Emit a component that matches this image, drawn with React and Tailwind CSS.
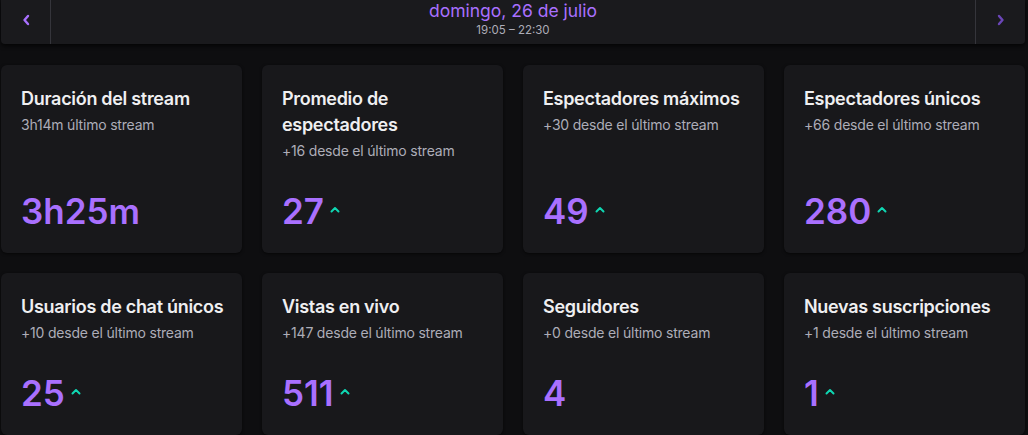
import React from 'react';

const stats = [
  { title: 'Duración del stream', note: '3h14m último stream', value: '3h25m', up: false },
  { title: 'Promedio de espectadores', note: '+16 desde el último stream', value: '27', up: true },
  { title: 'Espectadores máximos', note: '+30 desde el último stream', value: '49', up: true },
  { title: 'Espectadores únicos', note: '+66 desde el último stream', value: '280', up: true },
  { title: 'Usuarios de chat únicos', note: '+10 desde el último stream', value: '25', up: true },
  { title: 'Vistas en vivo', note: '+147 desde el último stream', value: '511', up: true },
  { title: 'Seguidores', note: '+0 desde el último stream', value: '4', up: false },
  { title: 'Nuevas suscripciones', note: '+1 desde el último stream', value: '1', up: true },
];

const Chevron = ({ dir, className }) => (
  <svg width="8" height="12" viewBox="0 0 8 12" className={className}>
    <path
      d={dir === 'left' ? 'M6 2 L2.5 6 L6 10' : 'M2 2 L5.5 6 L2 10'}
      fill="none"
      stroke="currentColor"
      strokeWidth="2.4"
      strokeLinecap="round"
      strokeLinejoin="round"
    />
  </svg>
);

const Caret = () => (
  <svg width="10" height="7" viewBox="0 0 10 7" className="text-[#0fd6b2] ml-[6px] mb-[4px]">
    <path d="M1.5 5.5 L5 2 L8.5 5.5" fill="none" stroke="currentColor" strokeWidth="2" strokeLinecap="round" strokeLinejoin="round" />
  </svg>
);

const StatCard = ({ stat }) => (
  <div className="flex flex-col rounded-md bg-[#18181b] pl-5 pr-3 pt-[21px] pb-6 shadow-[0_1px_3px_rgba(0,0,0,0.6)]">
    <h3 className="text-[18px] leading-[26px] font-semibold tracking-[-0.3px] text-[#efeff1]">{stat.title}</h3>
    <p className="mt-[3px] text-[14px] leading-5 tracking-[-0.2px] text-[#adadb8]">{stat.note}</p>
    <div className="mt-auto pt-8 flex items-center">
      <span className="text-[35px] leading-9 font-semibold text-[#a970ff]">{stat.value}</span>
      {stat.up && <Caret />}
    </div>
  </div>
);

export default function App() {
  return (
    <div className="min-h-screen bg-[#0e0e10] pl-px pr-[3px] font-['Inter',sans-serif]">
      <div className="flex h-11 bg-[#1a1a1d] rounded-b-sm shadow-[0_2px_4px_rgba(0,0,0,0.7)]">
        <button className="w-[50px] shrink-0 flex items-center justify-center pb-1 border-r border-[#35353b] text-[#a970ff]">
          <Chevron dir="left" />
        </button>
        <div className="flex-1 flex flex-col items-center">
          <span className="text-[17.5px] leading-[22px] text-[#a970ff]">domingo, 26 de julio</span>
          <span className="text-[11.5px] leading-4 text-[#adadb8]">19:05 – 22:30</span>
        </div>
        <button className="w-[50px] shrink-0 flex items-center justify-center pb-1 border-l border-[#35353b] text-[#6b46b8]">
          <Chevron dir="right" />
        </button>
      </div>

      <div className="grid grid-cols-4 gap-x-5 gap-y-5 mt-[21px]">
        {stats.map((s) => (
          <StatCard key={s.title} stat={s} />
        ))}
      </div>
    </div>
  );
}
